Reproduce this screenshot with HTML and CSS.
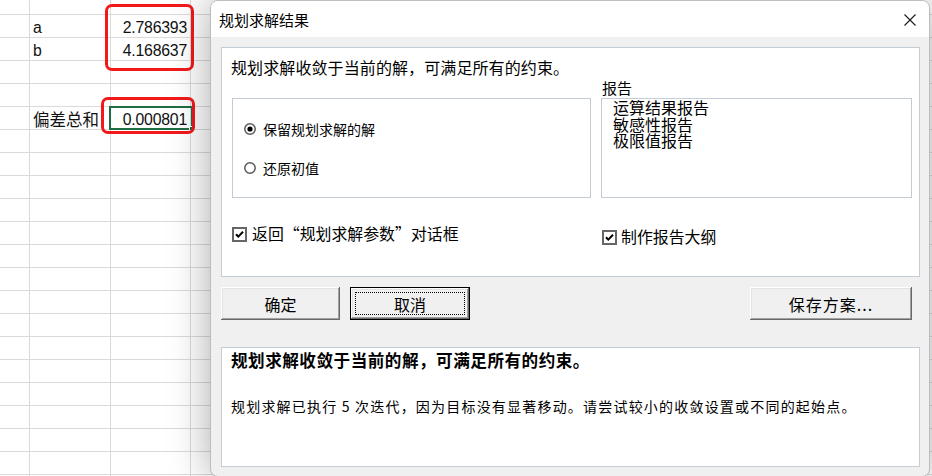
FILE: index.html
```html
<!DOCTYPE html>
<html lang="zh-CN">
<head>
<meta charset="utf-8">
<title>规划求解结果</title>
<link rel="stylesheet" href="styles.css">
</head>
<body>
<div class="screen">
  <div class="sheet">
    <div class="cell label r2">a</div>
    <div class="cell num r2">2.786393</div>
    <div class="cell label r3">b</div>
    <div class="cell num r3">4.168637</div>
    <div class="cell label cjk r6">偏差总和</div>
    <div class="cell num r6">0.000801</div>
  </div>
  <div class="active-cell"><span class="handle"></span></div>
  <div class="mark mark-ab"></div>
  <div class="mark mark-sum"></div>

  <div class="dialog">
    <div class="titlebar">
      <span class="title">规划求解结果</span>
      <svg class="close" width="12" height="12" viewBox="0 0 12 12"><path d="M0.5 0.5L11.5 11.5M11.5 0.5L0.5 11.5" stroke="#1a1a1a" stroke-width="1.1" fill="none"/></svg>
    </div>
    <div class="body">
      <div class="panel top-panel">
        <div class="headline">规划求解收敛于当前的解，可满足所有的约束。</div>
        <div class="report-label">报告</div>
        <div class="group">
          <div class="radio-row first">
            <svg class="radio" width="12" height="12" viewBox="0 0 12 12"><circle cx="6" cy="6" r="5.2" fill="#fff" stroke="#595959" stroke-width="1.5"/><circle cx="6" cy="6" r="2.6" fill="#000"/></svg>
            <span>保留规划求解的解</span>
          </div>
          <div class="radio-row">
            <svg class="radio" width="12" height="12" viewBox="0 0 12 12"><circle cx="6" cy="6" r="5.2" fill="#fff" stroke="#595959" stroke-width="1.5"/></svg>
            <span>还原初值</span>
          </div>
        </div>
        <div class="listbox">
          <div class="item">运算结果报告</div>
          <div class="item">敏感性报告</div>
          <div class="item">极限值报告</div>
        </div>
        <div class="check check-left">
          <svg class="box" width="15" height="15" viewBox="0 0 15 15"><rect x="1" y="1" width="13" height="13" fill="#fff" stroke="#666" stroke-width="2"/><path d="M4 7.2L6.3 9.6L11 4.8" stroke="#000" stroke-width="2" fill="none"/></svg>
          <span>返回“规划求解参数”对话框</span>
        </div>
        <div class="check check-right">
          <svg class="box" width="15" height="15" viewBox="0 0 15 15"><rect x="1" y="1" width="13" height="13" fill="#fff" stroke="#666" stroke-width="2"/><path d="M4 7.2L6.3 9.6L11 4.8" stroke="#000" stroke-width="2" fill="none"/></svg>
          <span>制作报告大纲</span>
        </div>
      </div>

      <div class="buttons">
        <button class="btn btn-ok">确定</button>
        <button class="btn btn-cancel">取消</button>
        <button class="btn btn-save">保存方案...</button>
      </div>

      <div class="panel msg-panel">
        <div class="msg-title">规划求解收敛于当前的解，可满足所有的约束。</div>
        <div class="msg-text">规划求解已执行 5 次迭代，因为目标没有显著移动。请尝试较小的收敛设置或不同的起始点。</div>
      </div>
    </div>
  </div>
</div>
</body>
</html>
```
FILE: styles.css
```css
* { box-sizing: border-box; }

body {
  margin: 0;
  width: 932px;
  height: 476px;
  overflow: hidden;
  background: #fff;
  font-family: "Noto Sans CJK SC", "Noto Sans", sans-serif;
  color: #000;
}

.screen {
  position: relative;
  width: 932px;
  height: 476px;
  overflow: hidden;
}

/* spreadsheet */
.sheet {
  display: grid;
  grid-template-columns: 30px 81px 80px 1fr;
  grid-template-rows: 15px repeat(20, 23px);
  height: 476px;
  background-image:
    linear-gradient(#dadada, #dadada),
    linear-gradient(#dadada, #dadada),
    linear-gradient(#dadada, #dadada),
    linear-gradient(to bottom, transparent 22px, #dadada 22px);
  background-size: 1px 100%, 1px 100%, 1px 100%, 100% 23px;
  background-position: 29px 0, 110px 0, 190px 0, 0 15px;
  background-repeat: no-repeat, no-repeat, no-repeat, repeat;
}

.cell {
  display: flex;
  align-items: flex-end;
  padding-bottom: 1px;
  font-family: "Liberation Sans", Arial, sans-serif;
  font-size: 15.8px;
  line-height: normal;
  color: #111;
  white-space: nowrap;
}
.label { grid-column: 2; padding-left: 3px; }
.num { grid-column: 3; justify-content: flex-end; padding-right: 4px; letter-spacing: -0.2px; }
.r2 { grid-row: 2; }
.r3 { grid-row: 3; }
.r6 { grid-row: 6; }
.cjk {
  font-family: "Noto Sans CJK SC", sans-serif;
  font-size: 16.5px;
  line-height: 22px;
  padding-bottom: 0;
}

.active-cell {
  position: absolute;
  left: 109px;
  top: 106px;
  width: 84px;
  height: 24px;
  border: 2px solid #1f6e43;
}
.handle {
  position: absolute;
  right: -3px;
  bottom: -3px;
  width: 5px;
  height: 5px;
  background: #1f6e43;
  border: 1px solid #fff;
}

.mark {
  position: absolute;
  border: 3px solid #f2191b;
  border-radius: 7px;
}
.mark-ab { left: 105px; top: 4px; width: 89px; height: 67px; }
.mark-sum { left: 101px; top: 97px; width: 94px; height: 37px; }

/* dialog window */
.dialog {
  position: absolute;
  left: 210px;
  top: 0;
  width: 720px;
  height: 477px;
  display: flex;
  flex-direction: column;
  background: #f0f0f0;
  border: 1px solid #bdbdbd;
  border-radius: 8px;
  overflow: hidden;
  box-shadow: 0 0 40px rgba(0, 0, 0, 0.34);
}

.titlebar {
  height: 36px;
  flex: none;
  display: flex;
  align-items: center;
  justify-content: space-between;
  padding: 0 13px 0 8px;
  background: #fff;
}
.title {
  font-size: 15px;
  line-height: 20px;
  padding-top: 1px;
}
.close { display: block; margin-top: 1px; }

.body {
  padding: 10px 9px 0 10px;
  display: flex;
  flex-direction: column;
}

.panel {
  background: #fff;
  border: 1px solid #c4ccd6;
}

.top-panel {
  height: 230px;
  display: grid;
  grid-template-columns: 359px 311px;
  grid-template-rows: 20px 21px 100px auto;
  column-gap: 10px;
  padding: 9px 7px 0 10px;
}

.headline {
  grid-column: 1 / 3;
  grid-row: 1;
  margin-left: -1px;
  font-size: 16px;
  letter-spacing: 0.1px;
  line-height: 20px;
  white-space: nowrap;
}

.report-label {
  grid-column: 2;
  grid-row: 2;
  font-size: 15px;
  line-height: 21px;
  padding-left: 1px;
}

.group {
  grid-column: 1;
  grid-row: 3;
  border: 1px solid #c4ccd6;
  padding: 20px 0 0 11px;
  display: flex;
  flex-direction: column;
  gap: 19px;
}
.radio-row {
  display: flex;
  align-items: center;
  height: 20px;
  font-size: 14px;
  line-height: 20px;
  gap: 7px;
}
.radio { display: block; flex: none; }

.listbox {
  grid-column: 2;
  grid-row: 3;
  border: 1px solid #c4ccd6;
  padding: 0 0 0 11px;
  font-size: 16px;
  line-height: 16.5px;
}

.check {
  grid-row: 4;
  display: flex;
  align-items: center;
  height: 20px;
  font-size: 15.9px;
  line-height: 20px;
  white-space: nowrap;
}
.check .box { display: block; flex: none; }
.check-left { grid-column: 1; margin-top: 26px; gap: 5px; }
.check-right { grid-column: 2; margin-top: 29px; gap: 4px; padding-left: 1px; }

/* buttons */
.buttons {
  display: flex;
  margin-top: 10px;
  height: 33px;
  gap: 10px;
}
.btn {
  position: relative;
  height: 33px;
  padding: 0;
  border: none;
  background: #f0f0f0;
  font-family: "Noto Sans CJK SC", sans-serif;
  font-size: 16px;
  color: #000;
  box-shadow:
    inset -1px -1px #696969,
    inset 1px 1px #ffffff,
    inset -2px -2px #a0a0a0,
    inset 2px 2px #e3e3e3;
}
.btn-ok { width: 119px; }
.btn-cancel {
  width: 120px;
  border: 1px solid #000;
}
.btn-cancel::after {
  content: "";
  position: absolute;
  inset: 4px;
  border: 1px dotted #000;
}
.btn-save {
  width: 162px;
  margin-left: auto;
  margin-right: 8px;
  letter-spacing: 1px;
}

/* message panel */
.msg-panel {
  margin-top: 27px;
  height: 120px;
  padding: 1px 0 0 9px;
}
.msg-title {
  font-size: 16.6px;
  font-weight: 700;
  line-height: 22px;
  letter-spacing: 0.5px;
  white-space: nowrap;
}
.msg-text {
  margin-top: 25px;
  font-size: 14px;
  line-height: 20px;
  letter-spacing: 1.2px;
  white-space: nowrap;
}
```
